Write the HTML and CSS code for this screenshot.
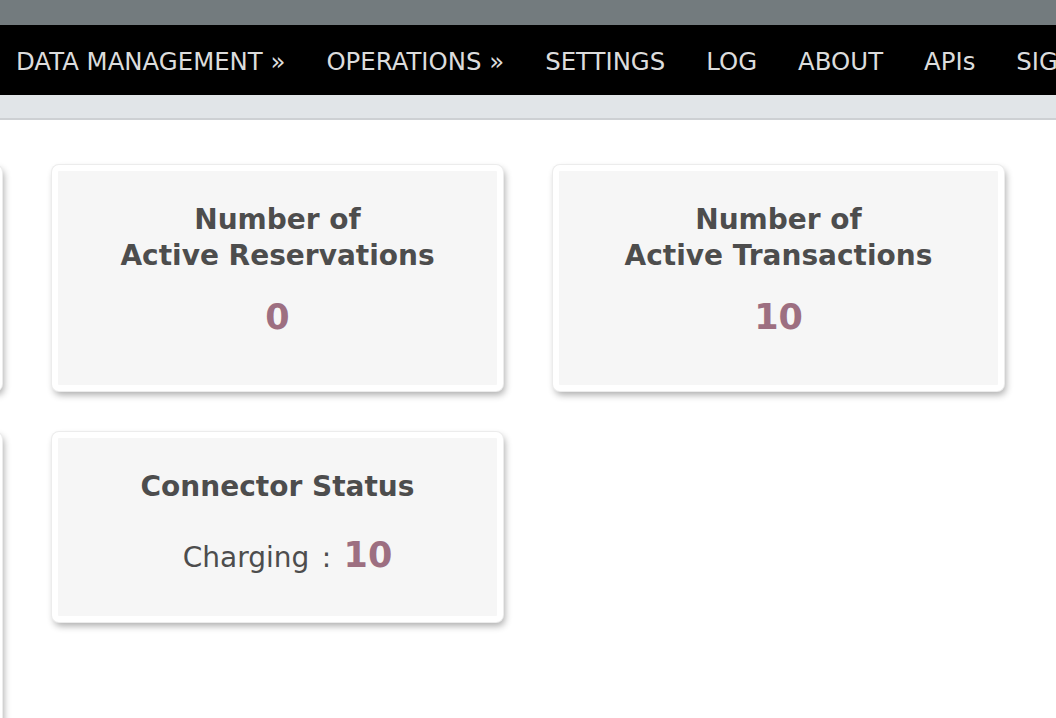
FILE: index.html
```html
<!DOCTYPE html>
<html lang="en">
<head>
<meta charset="utf-8">
<title>Dashboard</title>
<link rel="stylesheet" href="styles.css">
</head>
<body>
  <div class="topbar"></div>
  <nav class="menu">
    <ul class="menu-list">
      <li class="menu-item">DATA MANAGEMENT &raquo;</li>
      <li class="menu-item">OPERATIONS &raquo;</li>
      <li class="menu-item">SETTINGS</li>
      <li class="menu-item">LOG</li>
      <li class="menu-item">ABOUT</li>
      <li class="menu-item">APIs</li>
      <li class="menu-item">SIGN OUT</li>
    </ul>
  </nav>
  <div class="subbar"></div>
  <main class="content">
    <div class="grid">
      <section class="card card-hidden"></section>
      <section class="card">
        <h3 class="card-title">Number of<br>Active Reservations</h3>
        <p class="card-value">0</p>
      </section>
      <section class="card">
        <h3 class="card-title">Number of<br>Active Transactions</h3>
        <p class="card-value">10</p>
      </section>
      <section class="card card-hidden card-tall"></section>
      <section class="card">
        <h3 class="card-title">Connector Status</h3>
        <p class="card-status">Charging : <span class="status-num">10</span></p>
      </section>
    </div>
  </main>
</body>
</html>
```
FILE: styles.css
```css
html, body {
  margin: 0;
  padding: 0;
  overflow: hidden;
  height: 100%;
}
body {
  font-family: "DejaVu Sans", Verdana, sans-serif;
  background: #ffffff;
  color: #4d4d4d;
}
.topbar {
  height: 25px;
  background: #737b7e;
}
.menu {
  height: 70px;
  background: #000000;
  overflow: hidden;
}
.menu-list {
  list-style: none;
  margin: 0;
  padding: 0 0 0 16px;
  display: flex;
  gap: 41px;
  white-space: nowrap;
  height: 100%;
  align-items: center;
}
.menu-item {
  color: #dcdcdc;
  font-size: 24.4px;
  line-height: 28px;
  padding-top: 3px;
}
.subbar {
  height: 23px;
  background: #e1e5e8;
  border-bottom: 2px solid #cdd0d3;
}
.content {
  padding-top: 45px;
}
.grid {
  display: grid;
  grid-template-columns: repeat(3, 451px);
  column-gap: 50px;
  row-gap: 41px;
  align-items: start;
  margin-left: -449px;
}
.card {
  background: #f6f6f6;
  border: 6px solid #ffffff;
  border-radius: 7px;
  box-shadow: 0 0 0 1px #ececec, 2px 4px 7px rgba(0, 0, 0, 0.32);
  padding: 31px 10px 38px;
  text-align: center;
}
.card-hidden {
  height: 214px;
  padding: 0;
  box-sizing: content-box;
}
.card-tall {
  height: 400px;
}
.card-title {
  margin: 0;
  font-size: 28px;
  line-height: 36px;
  font-weight: bold;
  color: #4d4d4d;
}
.card-value {
  margin: 23px 0 10px;
  font-size: 35px;
  line-height: 40px;
  font-weight: bold;
  color: #9d6f81;
}
.card-status {
  margin: 30px 0 0;
  padding-left: 20px;
  font-size: 28px;
  line-height: 40px;
  word-spacing: 3.5px;
  color: #4d4d4d;
}
.status-num {
  font-size: 35px;
  font-weight: bold;
  word-spacing: 0;
  color: #9d6f81;
}
```
